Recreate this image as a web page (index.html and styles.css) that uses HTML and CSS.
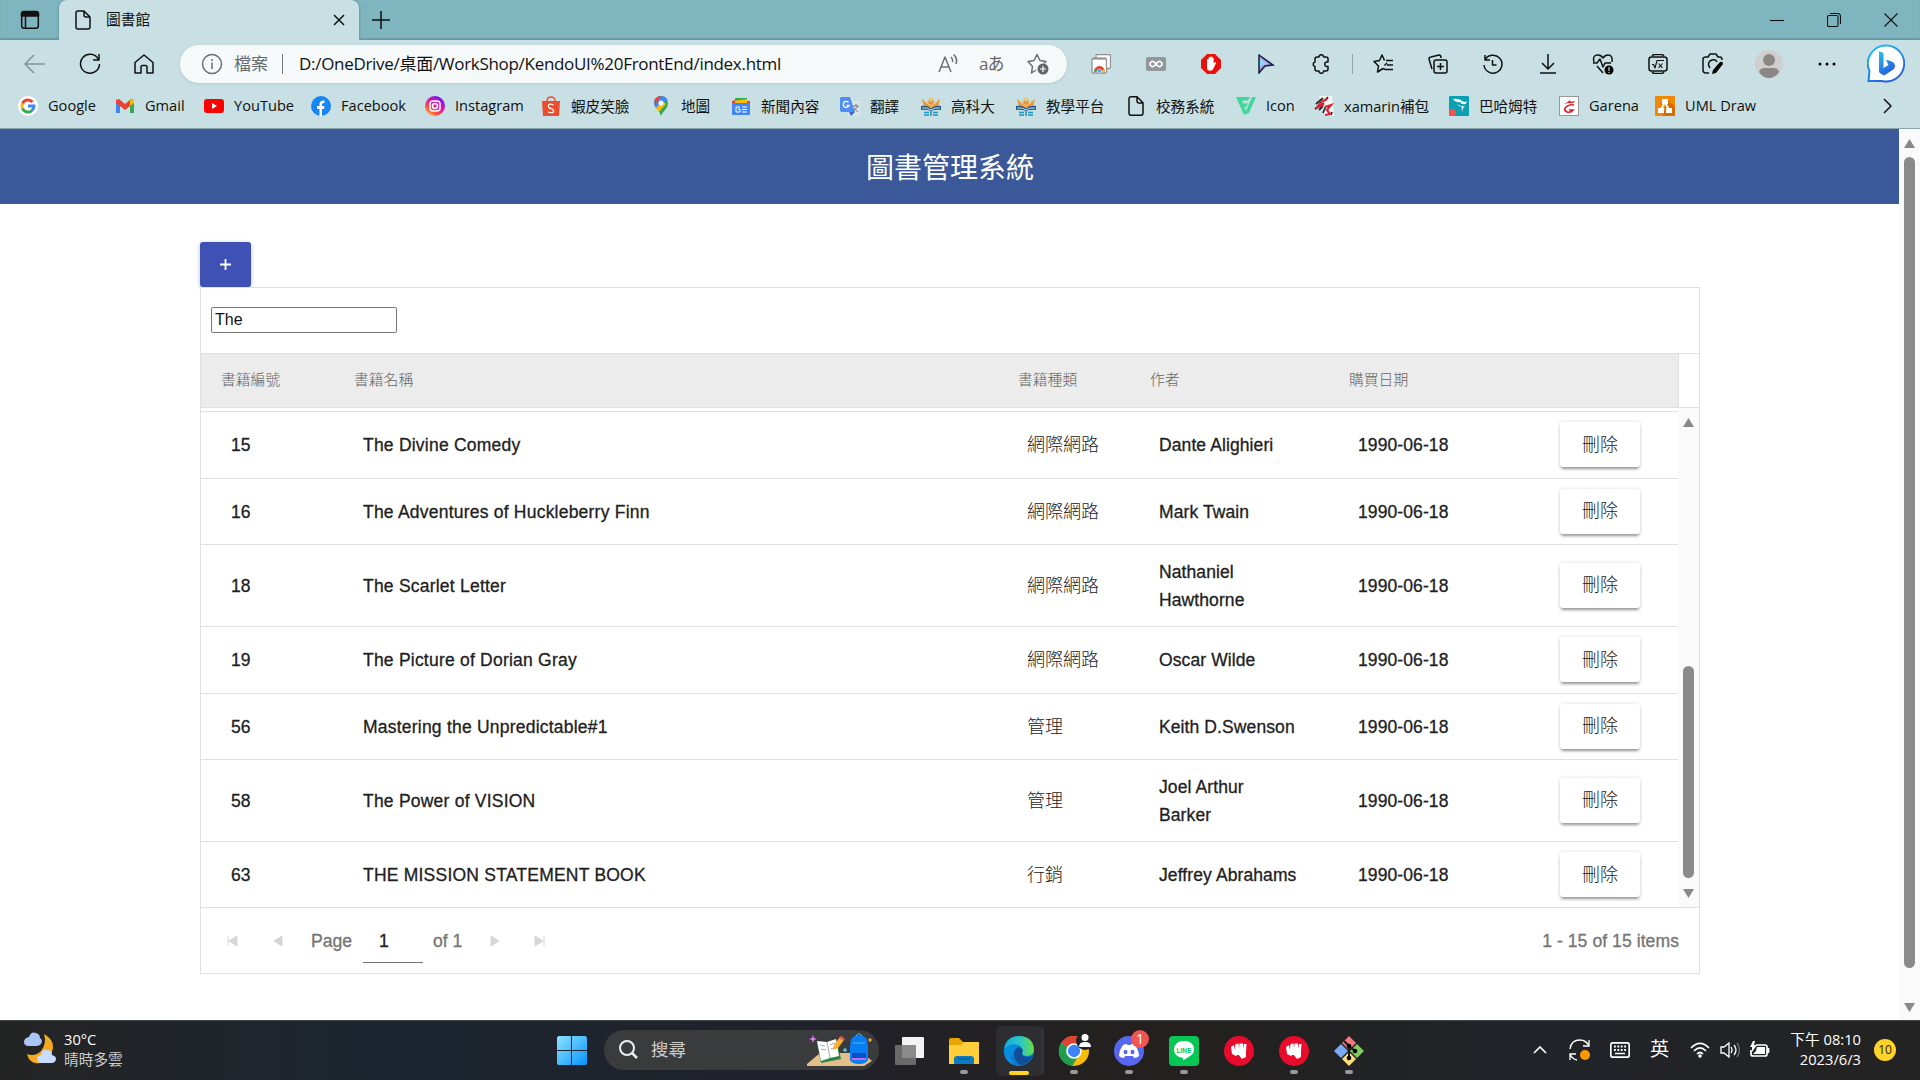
FILE: index.html
```html
<!DOCTYPE html>
<html lang="zh-Hant">
<head>
<meta charset="utf-8">
<title>圖書館</title>
<link rel="stylesheet" href="styles.css">
</head>
<body>
<header class="browser">
  <div class="tabstrip">
    <div class="tab-actions"><svg width="20" height="20" viewBox="0 0 20 20"><rect x="1.7" y="1.7" width="16.6" height="16.6" rx="2.5" class="ln"/><path d="M1.5 6V4q0-2.500 2.500-2.500h12q2.500 0 2.500 2.500v2zM5.500 6v12" class="ln dark"/></svg></div>
    <div class="tab">
      <svg width="16" height="20" viewBox="0 0 16 20"><path d="M3 1h6l6 6v10q0 2-2 2H3q-2 0-2-2V3q0-2 2-2zM9 1v4q0 2 2 2h4" class="ln"/></svg>
      <span class="tab-title">圖書館</span>
      <svg width="12" height="12" viewBox="0 0 12 12"><path d="M1 1l10 10M11 1L1 11" class="ln"/></svg>
    </div>
    <svg class="newtab" width="18" height="18" viewBox="0 0 18 18"><path d="M9 0v18M0 9h18" class="ln"/></svg>
    <div class="winctl">
      <svg width="14" height="14" viewBox="0 0 14 14"><path d="M0 7.500h14" class="ln thin"/></svg>
      <svg width="14" height="14" viewBox="0 0 14 14"><rect x=".5" y="2.500" width="10.500" height="11" rx="1.500" class="ln thin"/><path d="M3 .5h7.500q3 0 3 3V11" class="ln thin"/></svg>
      <svg width="14" height="14" viewBox="0 0 14 14"><path d="M.5.5l13 13M13.500.5l-13 13" class="ln thin"/></svg>
    </div>
  </div>
  <div class="toolbar">
    <div class="nav">
      <svg width="22" height="20" viewBox="0 0 22 20"><path d="M21 10H1M10 1L1 10l9 9" class="ln faded"/></svg>
      <svg width="22" height="22" viewBox="0 0 22 22"><path d="M19.500 6.500A9.500 9.500 0 1 0 20.500 11M20 1v6h-6" class="ln"/></svg>
      <svg width="20" height="20" viewBox="0 0 20 20"><path d="M1 8.500L10 1l9 7.500V19h-6v-6q0-1.500-1.500-1.500h-3Q7 11.500 7 13v6H1z" class="ln"/></svg>
    </div>
    <div class="address">
      <svg class="info" width="22" height="22" viewBox="0 0 22 22"><circle cx="11" cy="11" r="9.500" class="ln grey"/><path d="M11 9.500V16M11 6v2" class="ln grey"/></svg>
      <span class="scheme">檔案</span><i class="bar"></i>
      <span class="url">D:/OneDrive/桌面/WorkShop/KendoUI%20FrontEnd/index.html</span>
      <svg class="aloud" width="20" height="20" viewBox="0 0 20 20"><path d="M1 18L7 3l6 15M3 13h8M13 3q2 2 1.500 5M15.500.5Q20 4 18 10" class="ln grey"/></svg>
      <span class="lang">aあ</span>
      <svg width="22" height="22" viewBox="0 0 22 22"><path d="M9 17l-4.500 3 1-6.500-4.500-5 6-1L10 1.500l3 6 6 1-2 2" class="ln grey"/><circle cx="16" cy="16" r="5.500" fill="#5f6568"/><path d="M16 13v6M13 16h6" stroke="#fff" stroke-width="1.200"/></svg>
    </div>
    <div class="tools">
      <svg width="20" height="20" viewBox="0 0 20 20"><path d="M5 5V1.500q0-1 1-1h12q1.500 0 1.500 1V13q0 1.500-1.500 1.500h-3V5z" fill="#fff" stroke="#929292" stroke-width="1.300"/><rect x="1" y="4.500" width="14.500" height="14.500" rx="1" fill="#fff" stroke="#929292" stroke-width="1.300"/><path d="M2 4.500h12.500" stroke="#929292" stroke-width="2"/><path d="M3 18a5.500 6 0 0 1 11 0" fill="#e33b2e"/><path d="M3 18q0-2 1-4l4 4z" fill="#4aa450"/><path d="M14 18q0-2-1-3l-4 3z" fill="#fbc116"/><path d="M6 18a2.500 3 0 0 1 5 0z" fill="#4387f0" stroke="#fff" stroke-width=".6"/></svg>
      <svg width="20" height="14" viewBox="0 0 20 14"><rect width="20" height="14" rx="2" fill="#929797"/><path d="M10 7Q7 3 5 5t0 4 5-2q3-4 5-2t0 4-5-2" fill="none" stroke="#fff" stroke-width="1.600"/></svg>
      <svg width="20" height="20" viewBox="0 0 20 20"><path d="M6 0h8l6 6v8l-6 6H6l-6-6V6z" fill="#e9100c"/><path d="M6 11V6q1-2 1.500 0V4q1-2 1.700 0V3q1-1.500 1.700 0v1q1-1.500 1.700 0v5l2-1q1 0 0 2l-3 6q-4 2-5.600-1z" fill="#fff"/></svg>
      <svg width="18" height="20" viewBox="0 0 18 20"><path d="M2 1l14 10-8 1-6 7z" fill="#b984df" stroke="#17243b" stroke-width="1.500"/><path d="M3 4l8 6-5 1-3 3z" fill="#8dd5f3"/></svg>
      <svg width="20" height="20" viewBox="0 0 20 20"><path d="M6 3h2a2.300 2.300 0 0 1 4.600 0H15q2 0 2 2v3h-1.500a2.300 2.300 0 0 0 0 4.500H17V15q0 2-2 2h-2.400a2.300 2.300 0 0 1-4.600 0H6q-2 0-2-2v-2.500a2.300 2.300 0 0 1 0-4.500V5q0-2 2-2z" class="ln"/></svg>
      <i class="bar light"></i>
      <svg width="20" height="20" viewBox="0 0 20 20"><path d="M13 6.500h7M14 11h6M12 15.500h8M10 14.500L4.500 18l1-6L1 7.500l5.500-1L9 1l2.500 5.500M10 14.500l2 1M11.500 11.500L14 9" class="ln"/></svg>
      <svg width="20" height="20" viewBox="0 0 20 20"><path d="M4 15L1 5q0-2 2-2l8-2q2 0 2 3" class="ln"/><rect x="6" y="6" width="13" height="13" rx="2" class="ln"/><path d="M12.500 9v7M9 12.500h7" class="ln"/></svg>
      <svg width="20" height="20" viewBox="0 0 20 20"><path d="M2 1v5h5M2 6a9 9 0 1 1-1 5M9.500 6v5h4" class="ln"/></svg>
      <svg width="18" height="20" viewBox="0 0 18 20"><path d="M9 0v15M3 9l6 6 6-6M1 19h16" class="ln"/></svg>
      <svg width="22" height="22" viewBox="0 0 22 22"><path d="M2 9q-2-7 4-7 3 0 5 3 2-3 5-3 5 0 4 7M1 10h4l3-4 3 8 2-4h6M5 13l6 7" class="ln"/><circle cx="17" cy="17" r="4.500"/><path d="M17 14v4M17 19v1" stroke="#fff"/></svg>
      <svg width="20" height="20" viewBox="0 0 20 20"><path d="M4 2q1-1.500 3-1.500h6q2 0 3 1.500M4 18q1 1.500 3 1.500h6q2 0 3-1.500" class="ln"/><rect x="1" y="3" width="18" height="14" rx="2.500" class="ln"/><path d="M4 10.500h1.500L7 14l2-7.500h7M10.500 9.500l4 4.500M14.500 9.500l-4 4.500" class="ln thin"/></svg>
      <svg width="22" height="22" viewBox="0 0 22 22"><path d="M7 20H4q-3 0-3-3V6q0-2 3-2h2l2-3h6l2 3h2q2 0 2 3M8 15q-3-4 0-7 5-3 7 1" class="ln"/><path d="M18 9q3-1 3 2l-7 9-4 1 1-4z"/></svg>
      <svg width="28" height="28" viewBox="0 0 28 28"><circle cx="14" cy="14" r="14" fill="#d0cfcd"/><circle cx="14" cy="10" r="6" fill="#8b8785"/><path d="M4 22q1-4 5-4h10q4 0 5 4-4 6-10 6T4 22" fill="#8b8785"/></svg>
      <svg width="18" height="4" viewBox="0 0 18 4"><circle cx="2" cy="2" r="1.500"/><circle cx="9" cy="2" r="1.500"/><circle cx="16" cy="2" r="1.500"/></svg>
      <svg class="bing" width="38" height="40" viewBox="0 0 38 40"><defs><linearGradient id="bg" x2=".5" y2="1"><stop stop-color="#29c3ee"/><stop offset="1" stop-color="#2460df"/></linearGradient></defs><path d="M19 1.500a18 18 0 1 1-4 35.500H1.500l1-10A18 18 0 0 1 19 1.500z" fill="#fff" stroke="url(#bg)" stroke-width="2"/><path d="M12 7l4.500 2v15l5-3-2.500-5q9 1 9 6 0 3-4 5l-6 4q-3 1-6-3z" fill="url(#bg)"/></svg>
    </div>
  </div>
  <nav class="bookmarks">
    <a><svg viewBox="0 0 20 20"><circle cx="10" cy="10" r="10" fill="#fff"/><g fill="none" stroke-width="3"><path d="M14.500 6A6 6 0 0 0 4.500 7.500" stroke="#ea4335"/><path d="M4.500 7.500a6 6 0 0 0 0 5" stroke="#fbbc05"/><path d="M4.500 12.500a6 6 0 0 0 9.500 2" stroke="#34a853"/><path d="M14 14.500q2-2 2-4.500h-6" stroke="#4285f4"/></g></svg><span>Google</span></a>
    <a><svg viewBox="0 0 20 20"><path d="M1 4h4v13H1z" fill="#4285f4"/><path d="M15 4h4v13h-4z" fill="#34a853"/><path d="M1 4l3-1 6 5 6-5 3 1v3l-9 7-9-7z" fill="#ea4335"/><path d="M15 4l4-1v4l-4 3z" fill="#fbbc04"/></svg><span>Gmail</span></a>
    <a><svg viewBox="0 0 20 20"><rect y="3" width="20" height="14" rx="3" fill="#f00"/><path d="M8 7v6l5-3z" fill="#fff"/></svg><span>YouTube</span></a>
    <a><svg viewBox="0 0 20 20"><circle cx="10" cy="10" r="10" fill="#1686f4"/><path d="M8.500 20v-7H6v-3h2.500V8q0-4 5-3.500V7q-2.500-.4-2.500 1.500V10h2.500l-.5 3h-2v7z" fill="#fff"/></svg><span>Facebook</span></a>
    <a><svg viewBox="0 0 20 20"><defs><linearGradient id="ig" x1="0" y1="1" x2=".7" y2="0"><stop stop-color="#fd5"/><stop offset=".35" stop-color="#ff543e"/><stop offset=".65" stop-color="#d915b0"/><stop offset="1" stop-color="#7018e8"/></linearGradient></defs><circle cx="10" cy="10" r="10" fill="url(#ig)"/><g fill="none" stroke="#fff" stroke-width="1.500"><rect x="5" y="5" width="10" height="10" rx="3"/><circle cx="10" cy="10" r="2.500"/></g></svg><span>Instagram</span></a>
    <a><svg viewBox="0 0 20 20"><path d="M1 5h18l-1 15H2z" fill="#ee4d2d"/><path d="M6 5q0-4 4-4t4 4" fill="none" stroke="#ee4d2d" stroke-width="1.500"/><path d="M12.500 9q-4.500-2-5 .5t2.500 3q3 1 2.500 3t-5.500.5" fill="none" stroke="#fff" stroke-width="1.300"/></svg><span>蝦皮笑臉</span></a>
    <a><svg viewBox="0 0 20 20"><path d="M10 20q-1-4-4-7T3 7a7 7 0 0 1 14 0q0 4-3 7t-4 6z" fill="#34a853"/><path d="M10 0a7 7 0 0 1 6.500 4L5 12Q3 9 3 7a7 7 0 0 1 7-7" fill="#4285f4"/><path d="M3.500 4Q6 0 10 0L4 9z" fill="#ea4335"/><path d="M5 12l6-7 4 3-7 8z" fill="#fbbc04"/><circle cx="10" cy="7" r="2.500" fill="#fff"/></svg><span>地圖</span></a>
    <a><svg viewBox="0 0 20 20"><path d="M4 2h12v10H4z" fill="#34a853"/><path d="M2 5l14-2 2 8H2z" fill="#fbbc04"/><path d="M1 5l3-1v8H1zM16 5h3v7h-3z" fill="#ea4335"/><rect x="1" y="7" width="18" height="12" rx="1" fill="#4285f4"/><path d="M9 11H5v5h4v-3H7M11 11h5M11 13.500h5M11 16h5" fill="none" stroke="#fff"/></svg><span>新聞內容</span></a>
    <a><svg viewBox="0 0 20 20"><rect x="8" y="5" width="12" height="15" rx="1" fill="#e1e4e7"/><path d="M1 1h9l5 15H2q-2 0-2-2V2z" fill="#4e8df5"/><path d="M9 16h6l-4 4z" fill="#3267d6"/><path d="M8.500 6.500a3 3 0 1 0 .5 3H6.500" stroke="#fff" stroke-width="1.300" fill="none"/><path d="M13 10h6M16 8v2M18 10l-5 6M14 12l4 4" fill="none" stroke="#747b83"/></svg><span>翻譯</span></a>
    <a><svg viewBox="0 0 20 20"><path d="M1 3l6 4 1-4 2 3 2-3 1 4 6-4-2 8H3z" fill="#e8963a"/><circle cx="10" cy="2.500" r="1.500" fill="#f5ca3c"/><path d="M3 5l7 5 7-5" fill="none" stroke="#f5d49a"/><path d="M0 10q5-1 10 2 5-3 10-2v4q-5-1-10 1-5-2-10-1z" fill="#1d5687"/><path d="M1 12q5-1 9 2 4-3 9-2" stroke="#c7e8ee" fill="none"/><path d="M3 16.500h5M12 16.500h5M3 19h5M12 19h5M10 15v5" stroke="#1d95bd" stroke-width="1.600"/></svg><span>高科大</span></a>
    <a><svg viewBox="0 0 20 20"><path d="M1 3l6 4 1-4 2 3 2-3 1 4 6-4-2 8H3z" fill="#e8963a"/><circle cx="10" cy="2.500" r="1.500" fill="#f5ca3c"/><path d="M3 5l7 5 7-5" fill="none" stroke="#f5d49a"/><path d="M0 10q5-1 10 2 5-3 10-2v4q-5-1-10 1-5-2-10-1z" fill="#1d5687"/><path d="M1 12q5-1 9 2 4-3 9-2" stroke="#c7e8ee" fill="none"/><path d="M3 16.500h5M12 16.500h5M3 19h5M12 19h5M10 15v5" stroke="#1d95bd" stroke-width="1.600"/></svg><span>教學平台</span></a>
    <a><svg viewBox="0 0 20 20"><path d="M5 .8h6l6 6V17q0 2.200-2 2.200H5Q3 19.200 3 17V3Q3 .8 5 .8zM11 1v4q0 2 2 2h4" class="ln"/></svg><span>校務系統</span></a>
    <a><svg viewBox="0 0 20 20"><path d="M0 1h14l-2 3.500H6l1.500 3H12l-2 3.500H8l2 4-2 4z" fill="#43d69b"/><path d="M16 1h4l-7 16-5 2z" fill="#43d69b"/></svg><span>Icon</span></a>
    <a><svg viewBox="0 0 20 20"><path d="M5 0h13l2 20H11L9 12z" fill="#f5f5f5"/><path d="M9 2L2 8M14 1l-3 4M1 13l9-6M5 14l4-4M12 10l-3 7M18 16l-1 3" fill="none" stroke="#2b272a" stroke-width="1.800"/><path d="M13 3L7 6l-2 3 5-1-8 4M11 11l6-2-4 5 3 4-5 1" fill="none" stroke="#d92132" stroke-width="2.100"/></svg><span>xamarin補包</span></a>
    <a><svg viewBox="0 0 20 20"><rect width="20" height="20" rx="1" fill="#0ba0b1"/><path d="M4 3q6-1 11 3 2 0 3-1-1 4-4 3-3 0-2-2-5 1-8-3zM8 8q4 3 8 2-4 3-2 8-2-5-1-7-3 0-5-3z" fill="#fff"/><circle cx="3.500" cy="16.500" r="3.500" fill="#ef5350"/></svg><span>巴哈姆特</span></a>
    <a><svg viewBox="0 0 20 20"><rect x=".5" y=".5" width="19" height="19" fill="#fff" stroke="#999"/><path d="M3 8q4 0 8-4-1 3 5 1-1 3-6 2-5 1-7 1z" fill="#e51923"/><path d="M15 9q-5-1-8 2t1 5q4 1 6-2h-4" fill="none" stroke="#e51923" stroke-width="1.700"/></svg><span>Garena</span></a>
    <a><svg viewBox="0 0 20 20"><rect width="20" height="20" rx="1" fill="#f08705"/><path d="M13 4l7 7v9H8z" fill="#d66c00"/><path d="M10 6l-4 8M10 6l4 8" stroke="#fff" stroke-width="1.800"/><path d="M7 3h6v5H7zM3 12h6v5H3zM11 12h6v5h-6z" fill="#fff"/></svg><span>UML Draw</span></a>
    <svg class="more" viewBox="0 0 10 16"><path d="M1 1l7 7-7 7" class="ln"/></svg>
  </nav>
</header>
<div class="viewport">
  <main>
    <h1>圖書管理系統</h1>
    <div class="content">
      <button class="add"><svg width="11" height="11" viewBox="0 0 11 11"><path d="M5.500 0v11M0 5.500h11" stroke="#fff" stroke-width="1.800"/></svg></button>
      <section class="grid">
        <div class="search"><input type="text" value="The"></div>
        <div class="head"><div class="cols heads"><span>書籍編號</span><span>書籍名稱</span><span>書籍種類</span><span>作者</span><span>購買日期</span><span></span></div></div>
        <div class="body">
          <div class="rows">
            <div class="cols row"><span>15</span><span>The Divine Comedy</span><span>網際網路</span><span>Dante Alighieri</span><span>1990-06-18</span><button>刪除</button></div>
            <div class="cols row short"><span>16</span><span>The Adventures of Huckleberry Finn</span><span>網際網路</span><span>Mark Twain</span><span>1990-06-18</span><button>刪除</button></div>
            <div class="cols row tall"><span>18</span><span>The Scarlet Letter</span><span>網際網路</span><span>Nathaniel<br>Hawthorne</span><span>1990-06-18</span><button>刪除</button></div>
            <div class="cols row"><span>19</span><span>The Picture of Dorian Gray</span><span>網際網路</span><span>Oscar Wilde</span><span>1990-06-18</span><button>刪除</button></div>
            <div class="cols row short"><span>56</span><span>Mastering the Unpredictable#1</span><span>管理</span><span>Keith D.Swenson</span><span>1990-06-18</span><button>刪除</button></div>
            <div class="cols row tall"><span>58</span><span>The Power of VISION</span><span>管理</span><span>Joel Arthur<br>Barker</span><span>1990-06-18</span><button>刪除</button></div>
            <div class="cols row last"><span>63</span><span>THE MISSION STATEMENT BOOK</span><span>行銷</span><span>Jeffrey Abrahams</span><span>1990-06-18</span><button>刪除</button></div>
          </div>
          <div class="scroll inner"><i class="up"></i><i class="thumb"></i><i class="down"></i></div>
        </div>
        <footer class="pager">
          <svg width="45" height="12" viewBox="0 0 45 12"><path d="M18 1v10M27 1v10l-8-5z" class="pg"/></svg>
          <svg width="45" height="12" viewBox="0 0 45 12"><path d="M27 1v10l-8-5z" class="pg"/></svg>
          <span class="page">Page</span><span class="num">1</span><span class="of">of 1</span>
          <svg width="45" height="12" viewBox="0 0 45 12"><path d="M18 1v10l8-5z" class="pg"/></svg>
          <svg width="45" height="12" viewBox="0 0 45 12"><path d="M17 1v10l8-5zM26 1v10" class="pg"/></svg>
          <span class="items">1 - 15 of 15 items</span>
        </footer>
      </section>
    </div>
  </main>
  <div class="scroll outer"><i class="up"></i><i class="thumb"></i><i class="down"></i></div>
</div>
<div class="taskbar">
  <div class="weather"><svg width="32" height="36" viewBox="0 0 32 36"><path d="M20 3q12 7 8 18-5 13-17 11-6-1-8-9 8 3 14-3 6-7 3-17z" fill="#f4a91e"/><path d="M5 15q-5 0-5-4t5-5q2-6 7-4 4 1 4 5 4 3 0 7-2 1-4 1z" fill="#abc5f7"/><path d="M17 32q-4-1-4-4t4-4q1-6 6-5 5 0 5 5 4 1 4 4t-4 4z" fill="#c8dcff"/></svg><p><b>30°C</b><span>晴時多雲</span></p></div>
  <div class="apps">
    <div><svg width="30" height="30" viewBox="0 0 30 30"><defs><linearGradient id="win" x2="1" y2="1"><stop stop-color="#8ee3ff"/><stop offset="1" stop-color="#0694fb"/></linearGradient></defs><path d="M1.500 0H14v14H0V1.500zM15 0h13.500L30 1.500V14H15zM0 15h14v14H1.500L0 28zM15 15h15v13l-1.500 1H15z" fill="url(#win)"/></svg></div>
    <div class="find"><svg width="19" height="19" viewBox="0 0 19 19"><circle cx="8" cy="8" r="7" fill="none" stroke="#eee" stroke-width="2"/><path d="M13 13l5 5" stroke="#eee" stroke-width="2.500"/></svg><span>搜尋</span>
      <svg class="art" width="66" height="34" viewBox="0 0 66 34"><path d="M0 31L13 20h43l9 8-8 5H0z" fill="#e3bd8a"/><path d="M10 10l20-2 4 18-20 4z" fill="#29874a"/><path d="M10 8l10 1 9-3 3 17-9 2-9 3z" fill="#fff"/><path d="M20 9l3 16M13 12l5 1M14 16l5 1M23 12l5-2M24 16l5-2" stroke="#a6a6b4"/><path d="M26 17l1-5 6-8 4 3-6 8z" fill="#ffae29"/><path d="M32 5l2-2 4 3-2 2z" fill="#f25e47"/><path d="M43 13q0-11 9-11t9 11v14q-2 4-9 4t-9-4z" fill="#097df2"/><path d="M45 20h14v7H45z" fill="#0450c9"/><path d="M45 26h14" stroke="#c36cff" stroke-width="2"/><path d="M49 3q3-5 6 0M46 10h12" fill="none" stroke="#50b6ff"/><path d="M6 2l1 3 3 1-3 1-1 3-1-3-3-1 3-1z" fill="#e87bff"/><circle cx="63" cy="7" r="1.700" fill="#ffa51f"/><circle cx="38" cy="17" r="1.700" fill="#56d2e7"/></svg></div>
    <div><svg width="30" height="30" viewBox="0 0 30 30"><rect x="8" y="1" width="22" height="21" rx="1" fill="#f4f4f4"/><rect x="1" y="9" width="21" height="20" rx="1" fill="#777" opacity=".85"/></svg></div>
    <div class="on"><svg width="30" height="28" viewBox="0 0 30 28"><path d="M0 3q0-2 2-2h8l4 4h14q2 0 2 2v6H0z" fill="#e7a500"/><path d="M0 8h12l3-3h15v22H0z" fill="#ffce39"/><path d="M5 27v-5q0-3 3-3h14q3 0 3 3v5z" fill="#0d79bf"/><path d="M9 22h12" stroke="#07518a"/></svg></div>
    <div class="active"><svg width="30" height="30" viewBox="0 0 30 30"><defs><linearGradient id="ed"><stop stop-color="#14a9df"/><stop offset=".55" stop-color="#2dc8c6"/><stop offset="1" stop-color="#68dc43"/></linearGradient></defs><circle cx="15" cy="15" r="15" fill="#0a7cd0"/><path d="M0 13Q2 0 16 0q13 1 14 13 0 7-7 7-5 0-5-3 2-3-1-6-6-6-17 2z" fill="url(#ed)"/><path d="M10 16q1-5 6-6-8-5-16 4v2q1 10 10 13Q4 21 10 16z" fill="#078ee1"/><path d="M10 18q0-6 6-7 4 3 2 6 0 4 6 4 3 0 5-2-4 10-13 10-6-4-6-11z" fill="#124e96"/></svg></div>
    <div class="on"><svg class="chrome" width="38" height="38" viewBox="0 0 38 38"><circle cx="17" cy="19" r="15" fill="#fbbc05"/><path d="M17 19L4 11a15 15 0 0 1 26 1H17z" fill="#e34133"/><path d="M17 19L4 11a15 15 0 0 0 11 23l8-12z" fill="#219b50"/><circle cx="17" cy="19" r="7" fill="#3e82f7" stroke="#fff" stroke-width="1.700"/><circle cx="28" cy="9" r="9" fill="#202226"/><circle cx="28" cy="5.500" r="3.500" fill="#fff"/><path d="M22 15q0-5 6-5t6 5z" fill="#fff"/></svg></div>
    <div class="on"><svg width="30" height="30" viewBox="0 0 30 30"><circle cx="15" cy="15" r="15" fill="#5867ef"/><path d="M9 9q2-1 4-1l.5 1h3L17 8q2 0 4 1 4 6 4 11-2 2-5 2l-1-2h-8l-1 2q-3 0-5-2 0-5 4-11z" fill="#fff"/><ellipse cx="11.500" cy="16" rx="2" ry="2.300" fill="#5867ef"/><ellipse cx="18.500" cy="16" rx="2" ry="2.300" fill="#5867ef"/></svg><em>1</em></div>
    <div class="on"><svg width="30" height="30" viewBox="0 0 30 30"><rect width="30" height="30" rx="4" fill="#06c755"/><path d="M15 5q10 0 10 8.500 0 4-4 6.500l-7 4.500V22Q5 21 5 13q1-8 10-8z" fill="#fff"/><text x="15" y="16.500" text-anchor="middle" class="linetext">LINE</text></svg></div>
    <div><svg width="30" height="30" viewBox="0 0 30 30"><circle cx="15" cy="15" r="15" fill="#e90b2c"/><path d="M7 11l3-2 1 5 .5-6 3-.5.5 5 .5-5h3.500l.5 5 .5-4.500h2.500L22 16v5l-5-2h-4l-1 1-4-2z" fill="#fff"/><path d="M14 18l6 1 2 2-4 2z" fill="#fff"/></svg></div>
    <div class="on"><svg width="30" height="30" viewBox="0 0 30 30"><circle cx="15" cy="15" r="15" fill="#e90b2c"/><path d="M7 11l3-2 1 5 .5-6 3-.5.5 5 .5-5h3.500l.5 5 .5-4.500h2.500L22 16v5l-5-2h-4l-1 1-4-2z" fill="#fff"/><path d="M14 18l6 1 2 2-4 2z" fill="#fff"/></svg></div>
    <div class="on"><svg width="30" height="30" viewBox="0 0 30 30"><path d="M15 0l7 7-7 7-7-7z" fill="#f47678"/><path d="M7 8l7 7-7 7-7-7z" fill="#78aaf5"/><path d="M23 8l7 7-7 7-7-7z" fill="#80cb5a"/><path d="M15 16l7 7-7 7-7-7z" fill="#f9dc78"/><path d="M10 5l5 5v13M15 10l6 5" fill="none" stroke="#17191c" stroke-width="2"/><circle cx="15" cy="10" r="2.300"/><circle cx="15" cy="22" r="2.300"/><circle cx="21" cy="15" r="2.300"/></svg></div>
  </div>
  <div class="tray">
    <svg width="14" height="8" viewBox="0 0 14 8"><path d="M1 7l6-6 6 6" class="wt"/></svg>
    <svg width="22" height="22" viewBox="0 0 22 22"><path d="M1 10Q2 1 11 1q6 0 9 6M20 1v6h-6M8 21q-5-1-7-6M1 21v-6h6" class="wt fine"/><circle cx="16" cy="16" r="5" fill="#ff9800"/></svg>
    <svg width="20" height="16" viewBox="0 0 20 16"><rect x=".8" y=".8" width="18.400" height="14.400" rx="2" class="wt"/><path d="M4 4.500h13M4 8h13" stroke="#fff" stroke-width="1.800" stroke-dasharray="1.800 1.600"/><path d="M5 11.500h10" stroke="#fff" stroke-width="1.500"/></svg>
    <span class="ime">英</span>
    <svg width="20" height="16" viewBox="0 0 20 16"><path d="M1 6q9-9 18 0M4 9q6-6 12 0M7 12q3-3 6 0" class="wt"/><circle cx="10" cy="14" r="1.800" fill="#fff"/></svg>
    <svg class="vol" width="20" height="16" viewBox="0 0 20 16"><path d="M1 5h3l5-4v14l-5-4H1zM11 5q2 3 0 6M14 3q4 5 0 10" class="wt fine"/><path d="M17 1q5 7 0 14" class="wt fine" opacity=".35"/></svg>
    <svg class="bat" width="20" height="17" viewBox="0 0 20 17"><path d="M6 4h9q2 0 2 2v7q0 2-2 2H3q-2 0-2-2V9M18.500 7v5" class="wt"/><path d="M7 6h8v7H3l3-3z" fill="#fff"/><path d="M3 0L0 6h2v5l5-7H4l1-4z" fill="#fff"/></svg>
    <p class="clock"><span>下午 08:10</span><span>2023/6/3</span></p>
    <b class="badge">10</b>
  </div>
</div>
</body>
</html>
```
FILE: styles.css
```css
* { box-sizing: border-box; }
body { margin: 0; width: 1920px; height: 1080px; overflow: hidden; display: flex; flex-direction: column; font-family: "Liberation Sans", "Noto Sans CJK TC", sans-serif; color: #212121; background: #fff; }
svg { display: block; flex: none; }
p { margin: 0; }
button { font-family: inherit; }
.ln { fill: none; stroke: #111; stroke-width: 1.5; stroke-linejoin: round; }
.ln.dark { fill: #111; }
.ln.thin { stroke-width: 1.1; }
.ln.faded { stroke: #7d9497; }
.ln.grey { stroke: #6a6f72; }

.browser { height: 129px; background: #c8dfe3; border-bottom: 1px solid #8ba4b0; font-family: "Open Sans", "Noto Sans CJK TC", sans-serif; color: #111; }
.tabstrip { height: 40px; display: flex; align-items: center; background: #7eb5bf; box-shadow: inset 0 -2px 1px #669da5; }
.tab-actions { width: 59px; padding-left: 20px; }
.tab { width: 300px; height: 40px; background: #c8dfe3; border-radius: 8px 8px 0 0; display: flex; align-items: center; padding: 0 14px 0 16px; box-shadow: 0 0 3px #50858d; clip-path: inset(0 -4px 0 -4px); }
.tab-title { flex: 1; margin-left: 15px; padding-bottom: 3px; font-size: 14.7px; }
.newtab { margin-left: 13px; }
.winctl { margin-left: auto; display: flex; gap: 43px; padding-right: 22px; }
.toolbar { height: 48px; display: flex; align-items: center; }
.nav { width: 180px; padding-left: 24px; display: flex; align-items: center; gap: 33px; }
.address { width: 887px; height: 38px; border-radius: 19px; background: #f5f9fa; box-shadow: 0 1px 3px #b1cbd0; display: flex; align-items: center; padding: 0 18px 0 21px; white-space: nowrap; }
.scheme { width: 35px; margin-left: 11px; padding-bottom: 3px; font-size: 17px; color: #666c70; }
.bar { width: 1px; height: 20px; background: #777; margin-left: 13px; }
.url { width: 620px; margin-left: 16px; padding-bottom: 3px; font-size: 17px; letter-spacing: -.3px; }
.aloud { margin-left: 19px; }
.lang { width: 24px; margin-left: auto; margin-right: 24px; padding-bottom: 3px; font-size: 17px; letter-spacing: -1px; color: #666; }
.tools { flex: 1; display: grid; grid-template-columns: 55px 55px 55px 55px 56px 6px 55px 55px 55px 55px 55px 55px 55px 58px 57px 1fr; justify-items: center; align-items: center; padding: 0 6px; }
.bar.light { background: #8fa5a8; margin: 0; }
.bing { margin-left: 2px; }
.bookmarks { height: 36px; display: grid; grid-template-columns: 97px 89px 107px 114px 116px 110px 80px 109px 81px 95px 110px 110px 78px 135px 110px 96px 1fr 10px; align-items: center; padding: 0 27px 0 18px; font-size: 14.6px; white-space: nowrap; }
.bookmarks a { display: flex; align-items: center; gap: 10px; }
.bookmarks a span { padding-bottom: 2px; }
.bookmarks a svg { width: 20px; height: 20px; }
.more { width: 10px; height: 16px; }

.viewport { height: 891px; display: flex; }
main { flex: 1; }
h1 { margin: 0; height: 75px; line-height: 79px; padding-left: 1px; text-align: center; color: #fff; background: #3b5998; font-size: 28px; font-weight: 400; }
.content { padding: 38px 0 0 200px; }
.add { display: flex; align-items: center; justify-content: center; width: 51px; height: 45px; border: 0; border-radius: 3px; background: #3f51b5; box-shadow: 0 1px 4px #bbb; padding: 0; }
.grid { width: 1500px; height: 687px; border: 1px solid #e0e0e0; background: #fff; }
.search { height: 65px; padding: 19px 10px; }
.search input { display: block; width: 186px; height: 26px; border: 1px solid #767676; border-radius: 2px; padding: 1px 3px 2px; font: 16px "Liberation Sans", sans-serif; color: #111; }
.head { height: 55px; border: solid #e0e0e0; border-width: 1px 0; padding-right: 20px; }
.cols { display: grid; grid-template-columns: 132px 664px 132px 199px 201px 1fr; align-items: center; }
.heads { height: 53px; background: #ececec; border-right: 1px solid #e0e0e0; font-size: 14.8px; font-weight: 300; color: #666; padding: 0 0 4px 20px; }
.heads span:nth-child(n+2) { padding-left: 1px; }
.body { height: 499px; display: flex; }
.rows { flex: 1; margin-top: 3px; border-top: 1px solid #e0e0e0; }
.row { height: 67px; border-bottom: 1px solid #e0e0e0; padding-left: 30px; font-size: 17.5px; line-height: 28px; letter-spacing: .1px; -webkit-text-stroke: .3px; }
.row.short { height: 66px; }
.row.tall { height: 82px; }
.row.last { border: 0; height: 65px; }
.row span:nth-child(2) { letter-spacing: .22px; }
.row span:nth-child(3), .row button { font-size: 18px; font-weight: 300; letter-spacing: 0; -webkit-text-stroke: 0; }
.row button { width: 80px; height: 45px; padding: 0 0 4px; margin: 0 0 1px 1px; border: 0; border-radius: 3px; background: #fff; color: #212121; box-shadow: 0 3px 3px -1px #999, 0 0 4px #ddd; }
.row.last button { margin-bottom: 0; }
.scroll { flex: none; display: flex; flex-direction: column; align-items: center; background: #fafafa; }
.scroll i { width: 11px; flex: none; }
.up { height: 9px; background: #888; clip-path: polygon(50% 0, 100% 100%, 0 100%); }
.down { height: 9px; background: #888; clip-path: polygon(0 0, 100% 0, 50% 100%); }
.thumb { background: #8a8a8a; border-radius: 6px; }
.inner { width: 21px; padding-top: 10px; }
.inner .thumb { height: 212px; margin: 239px 0 11px; }
.outer { width: 21px; padding-top: 10px; }
.outer .thumb { height: 811px; margin: 9px 0 35px; }
.pager { height: 66px; border-top: 1px solid #e0e0e0; display: flex; align-items: center; padding: 0 20px 0 9px; font-size: 17.6px; color: #757575; -webkit-text-stroke: .3px; }
.pg { fill: #d6d6d6; stroke: #d6d6d6; stroke-width: 1; }
.page { width: 52px; margin-left: 11px; }
.num { width: 60px; height: 45px; line-height: 46px; padding-left: 16px; border-bottom: 1px solid #757575; color: #212121; }
.of { width: 31px; margin: 0 9px 0 10px; white-space: nowrap; }
.page, .of, .items { padding-top: 2px; }
.items { margin-left: auto; letter-spacing: .05px; }

.taskbar { height: 60px; background: linear-gradient(90deg, #242424, #1c2630 20%, #20222b 40%, #24201e 60%, #202429 80%, #242323); border-top: 1px solid #444849; display: flex; align-items: center; color: #fff; font-family: "Open Sans", "Noto Sans CJK TC", sans-serif; }
.weather { width: 544px; display: flex; padding-left: 24px; gap: 8px; align-items: center; }
.weather svg { margin-top: -4px; }
.weather p, .clock { display: flex; flex-direction: column; font-size: 14.7px; line-height: 20px; margin-top: -4px; }
.weather b { font-weight: 400; }
.weather span { color: #ccc; }
.apps { display: grid; grid-template-columns: 56px 281px repeat(9, 55px); height: 59px; align-items: center; }
.apps > div { height: 59px; display: flex; align-items: center; justify-content: center; position: relative; }
.apps > .find { width: 275px; height: 40px; margin: 0 0 2px 4px; border-radius: 20px; background: #3a3b3d; justify-content: flex-start; padding-left: 15px; font-size: 17.5px; color: #ccc; }
.find span { margin-left: 13px; padding-bottom: 3px; }
.find .art { margin-left: auto; margin-right: 6px; }
.apps > .active { height: 50px; width: 45px; margin-left: 5px; border-radius: 5px; background: #2c2e32; box-shadow: 4px 0 0 -1px #303337; }
.chrome { margin: 0 0 0 4px; }
.on::after, .active::after { content: ""; position: absolute; bottom: 6px; width: 8px; height: 4px; border-radius: 2px; background: #999; }
.active::after { bottom: 1px; width: 20px; background: #ffd52a; }
.apps em { position: absolute; left: 30px; top: 9px; width: 18px; height: 18px; border-radius: 9px; background: #ef5552; font: 14px/18px "Open Sans", sans-serif; text-align: center; }
.linetext { font: bold 6.5px "Liberation Sans", sans-serif; fill: #06c755; }
.tray { flex: 1; display: flex; align-items: center; justify-content: flex-end; padding: 0 24px 2px 0; }
.wt { fill: none; stroke: #fff; stroke-width: 1.7; }
.wt.fine { stroke-width: 1.3; }
.tray > svg:nth-child(1) { margin-right: 22px; }
.tray > svg:nth-child(2) { margin-right: 19px; }
.ime { width: 20px; margin: -3px 20px 0; font-size: 19px; }
.vol { margin-left: 10px; }
.bat { margin-left: 10px; }
.clock { width: 91px; text-align: right; white-space: nowrap; margin-top: -2px; }
.badge { width: 22px; height: 22px; margin-left: 13px; border-radius: 11px; background: #ffd229; color: #222; font-size: 12px; font-weight: 400; line-height: 22px; text-align: center; }
```
